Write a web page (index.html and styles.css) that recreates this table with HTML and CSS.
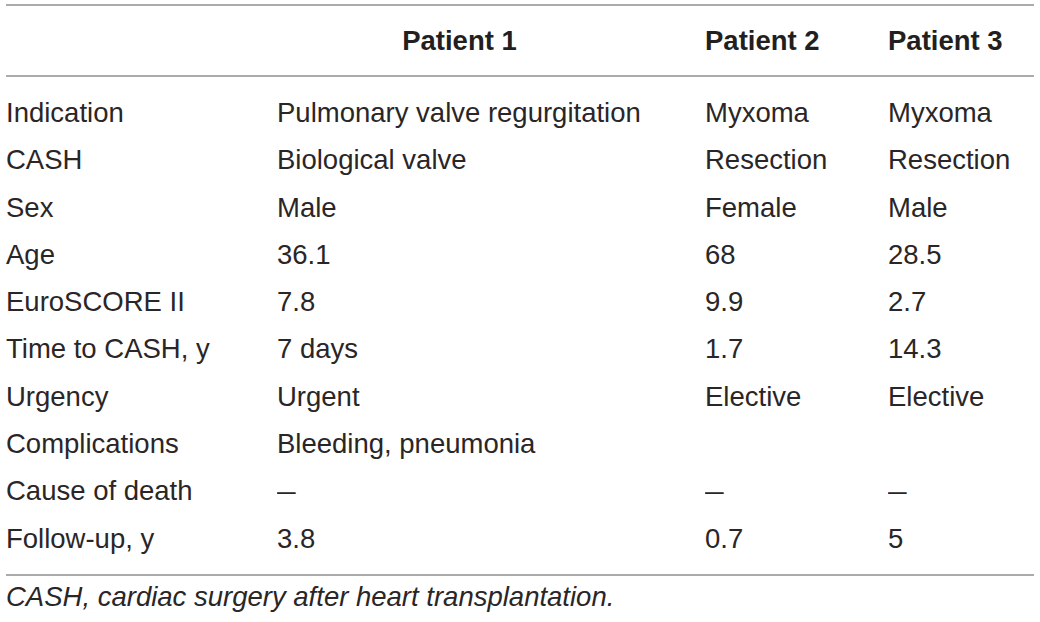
FILE: index.html
```html
<!DOCTYPE html>
<html lang="en">
<head>
<meta charset="utf-8">
<title>Patients</title>
<link rel="stylesheet" href="styles.css">
</head>
<body>
<div class="wrap">
  <table class="tbl">
    <colgroup>
      <col class="c0"><col class="c1"><col class="c2"><col class="c3">
    </colgroup>
    <thead>
      <tr>
        <th></th>
        <th class="center">Patient 1</th>
        <th>Patient 2</th>
        <th>Patient 3</th>
      </tr>
    </thead>
    <tbody>
      <tr class="first"><td>Indication</td><td>Pulmonary valve regurgitation</td><td>Myxoma</td><td>Myxoma</td></tr>
      <tr><td>CASH</td><td>Biological valve</td><td>Resection</td><td>Resection</td></tr>
      <tr><td>Sex</td><td>Male</td><td>Female</td><td>Male</td></tr>
      <tr><td>Age</td><td>36.1</td><td>68</td><td>28.5</td></tr>
      <tr><td>EuroSCORE II</td><td>7.8</td><td>9.9</td><td>2.7</td></tr>
      <tr><td>Time to CASH, y</td><td>7 days</td><td>1.7</td><td>14.3</td></tr>
      <tr><td>Urgency</td><td>Urgent</td><td>Elective</td><td>Elective</td></tr>
      <tr><td>Complications</td><td>Bleeding, pneumonia</td><td></td><td></td></tr>
      <tr><td>Cause of death</td><td><span class="dash">–</span></td><td><span class="dash">–</span></td><td><span class="dash">–</span></td></tr>
      <tr class="last"><td>Follow-up, y</td><td>3.8</td><td>0.7</td><td>5</td></tr>
    </tbody>
  </table>
  <p class="note">CASH, cardiac surgery after heart transplantation.</p>
</div>
</body>
</html>
```

FILE: styles.css
```css
html, body {
  margin: 0;
  padding: 0;
  background: #ffffff;
}

body {
  font-family: "Liberation Sans", Arial, sans-serif;
  color: #2a2627;
  font-size: 27.5px;
}

.wrap {
  padding: 4px 6px 0 6px;
}

.tbl {
  width: 1028px;
  border-collapse: collapse;
  table-layout: fixed;
  border-top: 2px solid #ababab;
  border-bottom: 2px solid #ababab;
}

.c0 { width: 271px; }
.c1 { width: 428px; }
.c2 { width: 183px; }
.c3 { width: 146px; }

.tbl th {
  font-weight: bold;
  text-align: left;
  height: 69px;
  padding: 0;
  line-height: 33px;
  border-bottom: 2px solid #ababab;
  vertical-align: middle;
  color: #231f20;
}

.tbl th.center {
  text-align: center;
  padding-right: 63px;
}

.tbl td {
  padding: 0;
  height: 47.3px;
  line-height: 47.3px;
  vertical-align: top;
  white-space: nowrap;
}

.tbl tr.first td {
  padding-top: 12px;
}

.tbl tr.last td {
  padding-bottom: 12px;
}

.dash {
  display: inline-block;
  transform: scaleX(1.22);
  transform-origin: left center;
}

.note {
  margin: 0;
  font-style: italic;
  line-height: 33px;
  padding-top: 4px;
}
```
